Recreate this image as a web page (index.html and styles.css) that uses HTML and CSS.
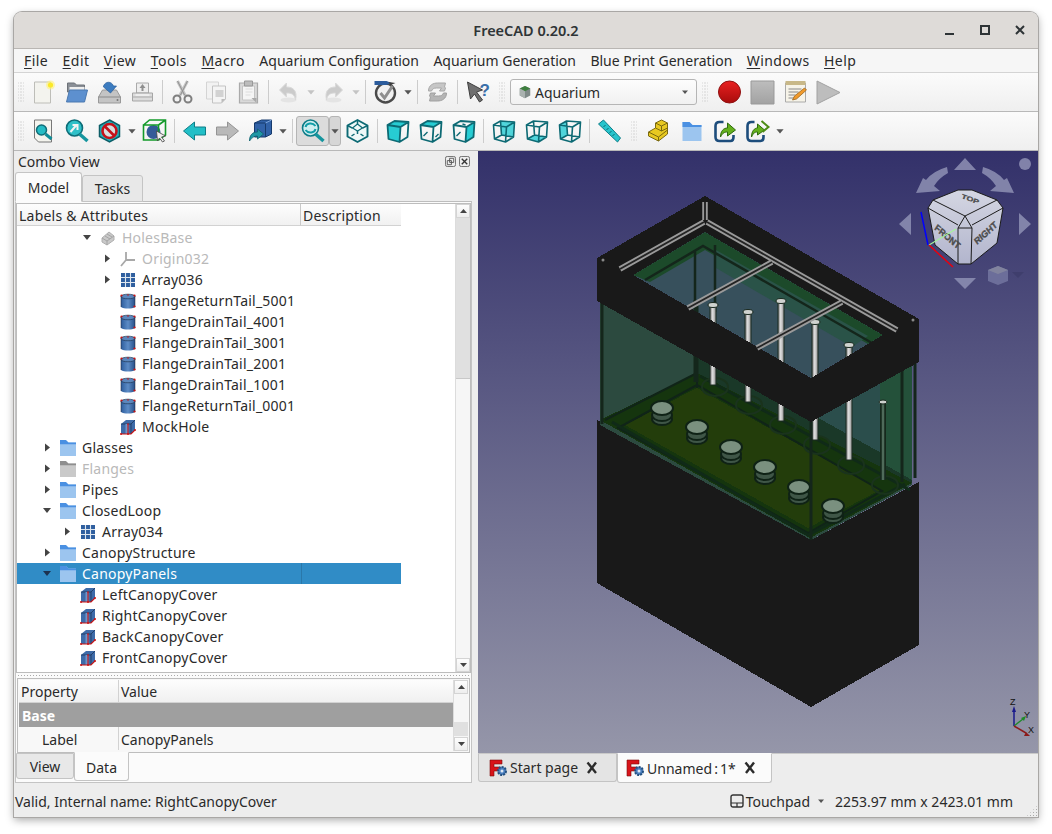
FILE: index.html
```html
<!DOCTYPE html>
<html lang="en">
<head>
<meta charset="utf-8">
<title>FreeCAD 0.20.2</title>
<link rel="stylesheet" href="styles.css">
</head>
<body>
<svg class="sprite" aria-hidden="true">
  <defs>
    <linearGradient id="gBlue" x1="0" y1="0" x2="1" y2="0"><stop offset="0" stop-color="#2c5c9c"/><stop offset=".5" stop-color="#5d8cc6"/><stop offset="1" stop-color="#274f88"/></linearGradient>
    <linearGradient id="gPipe" x1="0" y1="0" x2="1" y2="0"><stop offset="0" stop-color="#777"/><stop offset=".45" stop-color="#e2e2e2"/><stop offset="1" stop-color="#8a8a8a"/></linearGradient>
    <linearGradient id="gCube" x1="0" y1="0" x2="0" y2="1"><stop offset="0" stop-color="#d4d6e2"/><stop offset="1" stop-color="#b2b5cd"/></linearGradient>
    <linearGradient id="gRec" x1="0" y1="0" x2="0" y2="1"><stop offset="0" stop-color="#e92020"/><stop offset="1" stop-color="#a80c0c"/></linearGradient>
    <linearGradient id="gStop" x1="0" y1="0" x2="0" y2="1"><stop offset="0" stop-color="#bdbdbd"/><stop offset="1" stop-color="#a2a2a2"/></linearGradient>

    <symbol id="new" viewBox="0 0 24 24"><path d="M3 2h16v21H3z" fill="#f3f3ee" stroke="#bdbdb8"/><circle cx="19" cy="5" r="4.500" fill="#fff27a" opacity=".6"/><circle cx="19" cy="5" r="2.600" fill="#fbe928"/></symbol>
    <symbol id="open" viewBox="0 0 24 24"><path d="M3 3h7l2 2h8v7H3z" fill="#8a8f96" stroke="#6d7278"/><path d="M5 7h15v4H5z" fill="#eee"/><path d="M5 10h18l-3 12H2z" fill="#5d90cf" stroke="#4a78b0"/></symbol>
    <symbol id="save" viewBox="0 0 24 24"><path d="M5 10h14l4 7v6H1v-6z" fill="#c4c4c4" stroke="#999"/><path d="M1 17h22" stroke="#8a8a8a"/><path d="M6 6c2-5 8-5 10 0h3l-6 7-7-6z" fill="#3c7cc0" stroke="#2a5d99" stroke-width=".7"/><circle cx="20" cy="20" r="1" fill="#777"/></symbol>
    <symbol id="print" viewBox="0 0 24 24"><path d="M6 3h12v10H6z" fill="#eee" stroke="#aaa"/><path d="M12 4l3 4h-2v3h-2V8H9z" fill="#8f8f8f"/><path d="M2 13h20v8H2z" fill="#dcdcdc" stroke="#a5a5a5"/><path d="M2 17h20" stroke="#aaa"/><path d="M5 15h14" stroke="#fff"/></symbol>
    <symbol id="cut" viewBox="0 0 24 24"><path d="M7 1l8 15M17 1L9 16" stroke="#c4c4c4" stroke-width="3" fill="none"/><path d="M7 1l7 14M17 1l-7 14" stroke="#8f8f8f" fill="none"/><circle cx="6.500" cy="19" r="3.500" fill="none" stroke="#7f7f7f" stroke-width="2"/><circle cx="17.500" cy="19" r="3.500" fill="none" stroke="#7f7f7f" stroke-width="2"/></symbol>
    <symbol id="copy" viewBox="0 0 24 24"><path d="M3 2h12v17H3z" fill="#f2f2f2" stroke="#d4d4d4"/><path d="M9 6h13v13l-4 4H9z" fill="#f4f4f4" stroke="#c3c3c3"/><path d="M12 10h8v7h-8z" fill="#d2d2d2"/><path d="M18 23v-4h4z" fill="#bbb"/></symbol>
    <symbol id="paste" viewBox="0 0 24 24"><path d="M3 3h18v20H3z" fill="#d9d9d9" stroke="#aaa" stroke-width="1.200"/><path d="M6 6h12v14H6z" fill="#f5f5f5" stroke="#c4c4c4"/><path d="M8 1h8v5H8z" fill="#bcbcbc" stroke="#999"/><path d="M9 9h7M9 12h7M9 15h5" stroke="#ddd"/><path d="M20 23v-5h-5z" fill="#aaa"/></symbol>
    <symbol id="undo" viewBox="0 0 24 24"><ellipse cx="12" cy="20" rx="8" ry="2.500" fill="#e4e4e4"/><path d="M3 10l7-7v4c7 0 11 4 9 13-1-6-4-7-9-7v4z" fill="#cbcbcb" stroke="#d9d9d9"/></symbol>
    <symbol id="redo" viewBox="0 0 24 24"><ellipse cx="12" cy="20" rx="8" ry="2.500" fill="#e4e4e4"/><path d="M21 10l-7-7v4C7 7 3 11 5 20c1-6 4-7 9-7v4z" fill="#cbcbcb" stroke="#d9d9d9"/></symbol>
    <symbol id="check" viewBox="0 0 24 24"><circle cx="12" cy="13" r="9.500" fill="#f1f1f1" stroke="#4a4a4a" stroke-width="2.400"/><path d="M7 13l4 5 8-12" fill="none" stroke="#8e8e8e" stroke-width="3"/><path d="M1 1h12l5 2-5 2H1z" fill="#2c5c9c"/><path d="M15 2l7 1-5 2" fill="#3d3d3d"/></symbol>
    <symbol id="refresh" viewBox="0 0 24 24"><path d="M3 11C3 5 8 3 12 3h8l-1 4 1 1-1 3h-5l2-3h-5c-3 0-4 1-5 3z" fill="#c6c6c6" stroke="#a8a8a8"/><path d="M21 13c0 6-5 8-9 8H4l1-4-1-1 1-3h5l-2 3h5c3 0 4-1 5-3z" fill="#b5b5b5" stroke="#a0a0a0"/></symbol>
    <symbol id="whats" viewBox="0 0 24 24"><path d="M2 2l15 8-6 2 6 8-3 2-5-8-4 5z" fill="#6f6f6f" stroke="#3f3f3f"/><text x="14" y="16" class="qm">?</text></symbol>

    <symbol id="fitall" viewBox="0 0 24 24"><path d="M3 1h17v22H7l-4-4z" fill="#f4f4ee" stroke="#777"/><circle cx="10" cy="11" r="5" fill="#25bcc4" stroke="#0e6d78" stroke-width="1.500"/><path d="M14 15l6 5" stroke="#0e8d98" stroke-width="3"/></symbol>
    <symbol id="fitsel" viewBox="0 0 24 24"><circle cx="10" cy="9" r="8" fill="#2fc0c8" stroke="#0e6d78" stroke-width="1.600"/><path d="M15 15l8 7" stroke="#15959e" stroke-width="3.500"/><path d="M6 13l6-7m-4 0h5v5" fill="none" stroke="#f3f3f3" stroke-width="2"/></symbol>
    <symbol id="nodraw" viewBox="0 0 24 24"><path d="M12 1l10 5.500v11L12 23 2 17.500v-11z" fill="#1fb4bd" stroke="#0d5d67" stroke-width="1.500"/><circle cx="12" cy="12" r="7" fill="#d7dfe0" stroke="#c5121a" stroke-width="2.600"/><path d="M7 7l10 10" stroke="#c5121a" stroke-width="2.600"/></symbol>
    <symbol id="boxsel" viewBox="0 0 24 24"><circle cx="11" cy="13" r="7" fill="#345c98"/><path d="M1 6v15h15V6zM1 6l6-5h16v15l-7 5M16 6l7-5" fill="none" stroke="#139a2a" stroke-width="1.600"/><path d="M14 12l9 5-4 1 3 4-2 1-3-4-2 3z" fill="#eee" stroke="#444" stroke-width=".8"/></symbol>
    <symbol id="back" viewBox="0 0 24 24"><path d="M1 12L12 3v5h11v8H12v5z" fill="#22bfc7" stroke="#0f7e88"/></symbol>
    <symbol id="fwd" viewBox="0 0 24 24"><path d="M23 12L12 3v5H1v8h11v5z" fill="#b9b9b9" stroke="#949494"/></symbol>
    <symbol id="bluebox" viewBox="0 0 24 24"><path d="M6 4l7-3h10v14l-6 3H6z" fill="#3162a8" stroke="#163a6c"/><path d="M6 4h11v14" fill="none" stroke="#163a6c"/><path d="M17 4l6-3" stroke="#7aa2d8"/><path d="M1 22c0-6 3-9 8-9V10l6 5-6 5v-3c-3 0-5 1-8 5z" fill="#1f97a5" stroke="#0e5f6c" stroke-width=".8"/></symbol>
    <symbol id="sync" viewBox="0 0 24 24"><circle cx="10" cy="9" r="8" fill="#cfeef0" stroke="#0e7d88" stroke-width="1.600"/><path d="M15 15l8 7" stroke="#15959e" stroke-width="3.500"/><path d="M5 8c1-4 7-5 10-1M15 10c-1 4-7 5-10 1" fill="none" stroke="#129ea8" stroke-width="2"/></symbol>
    <symbol id="iso" viewBox="0 0 24 24"><path d="M12 1l10 5.500v11L12 23 2 17.500v-11z" fill="#eef8f8" stroke="#0d6a74" stroke-width="1.900" stroke-linejoin="round"/><path d="M2 6.500l5 2.700M22 6.500l-5 2.700M12 1v4M12 12v3" fill="none" stroke="#0d6a74" stroke-width="1.500"/><path d="M7 9l5-4 5 4-5 3z" fill="none" stroke="#0d6a74" stroke-width="1.200"/><path d="M6 17l3-2M18 17l-3-2" stroke="#0d6a74" stroke-width="1.500"/></symbol>
    <g id="cubefront"><path d="M2 6L9 2 23 3 22 18 14 23 3 20zM2 6L15 8 23 3M15 8L14 23" fill="none" stroke="#0d6a74" stroke-width="1.800" stroke-linejoin="round"/></g>
    <g id="cubeback"><path d="M2 6L9 2 23 3 22 18 14 23 3 20zM9 2L10 16 22 18M10 16L3 20M2 6L15 8 23 3M15 8L14 23" fill="none" stroke="#0d6a74" stroke-width="1.600" stroke-linejoin="round"/></g>
    <symbol id="vfront" viewBox="0 0 24 24"><path d="M2 6L15 8 14 23 3 20zM9 2L23 3 15 8 2 6z" fill="#27ccd3"/><use href="#cubefront"/></symbol>
    <symbol id="vtop" viewBox="0 0 24 24"><path d="M2 6L9 2 23 3 15 8z" fill="#27ccd3"/><use href="#cubefront"/><path d="M5 17l4-4M17 18l3-3" stroke="#0d6a74" stroke-width="1.400"/></symbol>
    <symbol id="vright" viewBox="0 0 24 24"><path d="M15 8L23 3 22 18 14 23z" fill="#27ccd3"/><use href="#cubefront"/><path d="M5 17l4-4M11 5l3 1" stroke="#0d6a74" stroke-width="1.400"/></symbol>
    <symbol id="vrear" viewBox="0 0 24 24"><path d="M9 2L23 3 22 18 10 16z" fill="#27ccd3" opacity=".8"/><use href="#cubeback"/></symbol>
    <symbol id="vbottom" viewBox="0 0 24 24"><path d="M3 20L10 16 22 18 14 23z" fill="#27ccd3" opacity=".8"/><use href="#cubeback"/></symbol>
    <symbol id="vleft" viewBox="0 0 24 24"><path d="M2 6L9 2 10 16 3 20z" fill="#27ccd3" opacity=".8"/><use href="#cubeback"/></symbol>
    <symbol id="measure" viewBox="0 0 24 24"><path d="M1 5l5-4 17 18-3 4z" fill="#27c4cc" stroke="#0d7d88"/><path d="M6 8l2-2M9 11l2-2M12 14l2-2M15 17l2-2" stroke="#0d6a74"/></symbol>
    <symbol id="part" viewBox="0 0 24 24"><path d="M2 13l7-4V4l6-3 6 3v11l-9 7-10-5z" fill="#e8c920" stroke="#7b6a10"/><path d="M9 9l6 3 6-3M9 4l6 3 6-3M15 7v5M2 13l10 5 9-7M12 18v4" fill="none" stroke="#7b6a10"/></symbol>
    <symbol id="folder" viewBox="0 0 24 24"><path d="M3 3h7l3 3h9v16H3z" fill="#9cc5ef"/><path d="M3 3h7l3 3h9v2H3z" fill="#4a90e2"/></symbol>
    <symbol id="tfolder" viewBox="3 3 19 19"><path d="M3 3h7l3 3h9v16H3z" fill="#9cc5ef"/><path d="M3 3h7l3 3h9v2H3z" fill="#4a90e2"/></symbol>
    <symbol id="link" viewBox="0 0 24 24"><path d="M11 3H7q-4 0-4 4v11q0 4 4 4h11q3 0 3-4v-2" fill="none" stroke="#1d4d7c" stroke-width="2.600"/><path d="M8 18c0-6 3-9 7-9V4l8 7-8 6v-4c-3 0-5 1-7 5z" fill="#64b01d" stroke="#2d6a0c"/></symbol>
    <symbol id="link2" viewBox="0 0 24 24"><path d="M9 3H6q-4 0-4 4v11q0 4 4 4h9q3 0 3-4v-2" fill="none" stroke="#1d4d7c" stroke-width="2.600"/><path d="M6 18c0-6 3-9 6-9V5l7 6-7 5v-3c-3 0-4 1-6 5z" fill="#64b01d" stroke="#2d6a0c"/><path d="M16 2l7 6-6 5" fill="none" stroke="#4e8c16" stroke-width="2"/></symbol>
    <symbol id="macro" viewBox="0 0 24 24"><path d="M2 3h20v19H2z" fill="#f6f3e8" stroke="#aaa"/><path d="M2 1h20v4H2z" fill="#c8b888"/><path d="M5 9h13M5 12h10M5 15h7M5 18h6" stroke="#888"/><path d="M9 20l2-4 10-8 2 2-10 9z" fill="#f19a2b" stroke="#8f5a12" stroke-width=".7"/></symbol>
    <symbol id="wb" viewBox="0 0 16 16"><path d="M8 1l6 3v8l-6 3-6-3V4z" fill="#7f8a88"/><path d="M8 1l6 3-6 3-6-3z" fill="#3f7f3f"/><path d="M2 4l6 3v8l-6-3z" fill="#aab2b0"/></symbol>

    <symbol id="cyl" viewBox="0 0 16 16"><path d="M1 3h14v11c-3 2-11 2-14 0z" fill="url(#gBlue)"/><ellipse cx="8" cy="3.500" rx="7" ry="2.300" fill="#5b87bd" stroke="#1e3552" stroke-width=".7"/><path d="M1 3v11M15 3v11" stroke="#223" stroke-width=".5"/><g fill="#c91414"><circle cx="1.500" cy="2.500" r="1.100"/><circle cx="14.500" cy="2.500" r="1.100"/><circle cx="14.500" cy="13.500" r="1.100"/><circle cx="8" cy="2" r=".8"/></g></symbol>
    <symbol id="box" viewBox="0 0 16 16"><path d="M1 5l5-4h9v10l-4 4H1z" fill="#3e6ba8"/><path d="M1 5h10v10M11 5l4-4" fill="none" stroke="#1c3558" stroke-width=".8"/><path d="M7 5v10" stroke="#6d96cc" stroke-width="3"/><path d="M1 15h10l4-4M8 5v10" fill="none" stroke="#c91414" stroke-width="1.100"/><g fill="#c91414"><circle cx="1" cy="15" r="1"/><circle cx="15" cy="11" r="1"/><circle cx="8" cy="15" r="1"/><circle cx="8" cy="5" r=".8"/></g></symbol>
    <symbol id="solid" viewBox="0 0 16 16"><path d="M2 8l7-6 5 4v4l-7 5-5-3z" fill="#c9c9c9" stroke="#b0b0b0"/><path d="M2 8l5 3 7-5M7 11v4M5 6l5 3M7 4l5 3" fill="none" stroke="#a5a5a5"/></symbol>
    <symbol id="origin" viewBox="0 0 16 16"><path d="M6 1v8l-5 6M6 9l9 0" fill="none" stroke="#a8a8a8" stroke-width="1.800"/></symbol>
    <symbol id="array" viewBox="0 0 16 16"><path d="M1 1h14v14H1z" fill="#2f5f9f"/><path d="M5.500 1v14M10.500 1v14M1 5.500h14M1 10.500h14" stroke="#dfe7ef" stroke-width="1.100"/></symbol>
    <symbol id="fc" viewBox="0 0 18 18"><path d="M1 1h12v4H5v3h6v4H5v5H1z" fill="#d8141a" stroke="#7a0a0a" stroke-width=".6"/><circle cx="13" cy="12" r="4" fill="#4a7fc0" stroke="#24507f" stroke-width="2" stroke-dasharray="2 1"/><circle cx="13" cy="12" r="1.500" fill="#dfe8f2"/></symbol>
    <symbol id="x" viewBox="0 0 14 14"><path d="M2.500 1.500L11 12M11 1.500L3 12" stroke="#2b2b2b" stroke-width="2.400" fill="none"/></symbol>
  </defs>
</svg>

<div class="window">
  <header class="titlebar">
    <span class="title">FreeCAD 0.20.2</span>
    <div class="winctl">
      <svg class="wbtn" viewBox="0 0 14 14"><path d="M2 11h9" stroke="#2e3436" stroke-width="2"/></svg>
      <svg class="wbtn" viewBox="0 0 14 14"><path d="M3 3h8v8H3z" fill="none" stroke="#2e3436" stroke-width="2"/></svg>
      <svg class="wbtn" viewBox="0 0 14 14"><path d="M3 3l8 8M11 3l-8 8" stroke="#2e3436" stroke-width="2"/></svg>
    </div>
  </header>

  <nav class="menubar">
    <span class="mi ul"><u>F</u>ile</span><span class="mi ul"><u>E</u>dit</span><span class="mi ul"><u>V</u>iew</span><span class="mi ul"><u>T</u>ools</span><span class="mi ul"><u>M</u>acro</span><span class="mi">Aquarium Configuration</span><span class="mi">Aquarium Generation</span><span class="mi">Blue Print Generation</span><span class="mi ul"><u>W</u>indows</span><span class="mi ul"><u>H</u>elp</span>
  </nav>

  <div class="toolbar">
    <i class="grip"></i>
    <svg class="tb"><use href="#new"/></svg><svg class="tb"><use href="#open"/></svg><svg class="tb"><use href="#save"/></svg><svg class="tb"><use href="#print"/></svg>
    <i class="sep"></i>
    <svg class="tb"><use href="#cut"/></svg><svg class="tb"><use href="#copy"/></svg><svg class="tb"><use href="#paste"/></svg>
    <i class="sep"></i>
    <svg class="tb"><use href="#undo"/></svg><i class="drop off"></i><svg class="tb"><use href="#redo"/></svg><i class="drop off"></i>
    <i class="sep"></i>
    <svg class="tb"><use href="#check"/></svg><i class="drop"></i>
    <i class="sep"></i>
    <svg class="tb"><use href="#refresh"/></svg>
    <i class="sep"></i>
    <svg class="tb"><use href="#whats"/></svg>
    <i class="grip wide"></i>
    <div class="combo"><svg class="wbicon"><use href="#wb"/></svg><span class="combotext">Aquarium</span><i class="drop small"></i></div>
    <i class="grip wide"></i>
    <svg class="tb" viewBox="0 0 33 24"><circle cx="16.500" cy="12" r="11" fill="url(#gRec)" stroke="#8f1010"/></svg>
    <svg class="tb" viewBox="0 0 33 24"><path d="M5 1h23v23H5z" fill="url(#gStop)" stroke="#999"/></svg>
    <svg class="tb"><use href="#macro"/></svg>
    <svg class="tb" viewBox="0 0 33 24"><path d="M5 1l23 11.500L5 24z" fill="#bdbdbd" stroke="#a2a2a2"/></svg>
  </div>

  <div class="toolbar">
    <i class="grip"></i>
    <svg class="tb"><use href="#fitall"/></svg><svg class="tb"><use href="#fitsel"/></svg><svg class="tb"><use href="#nodraw"/></svg><i class="drop"></i><svg class="tb"><use href="#boxsel"/></svg>
    <i class="sep"></i>
    <svg class="tb"><use href="#back"/></svg><svg class="tb"><use href="#fwd"/></svg><svg class="tb"><use href="#bluebox"/></svg><i class="drop"></i>
    <i class="sep"></i>
    <div class="pressed"><svg class="tb"><use href="#sync"/></svg></div><div class="pressed-drop"><i class="drop"></i></div>
    <svg class="tb"><use href="#iso"/></svg>
    <i class="sep"></i>
    <svg class="tb"><use href="#vfront"/></svg><svg class="tb"><use href="#vtop"/></svg><svg class="tb"><use href="#vright"/></svg>
    <i class="sep"></i>
    <svg class="tb"><use href="#vrear"/></svg><svg class="tb"><use href="#vbottom"/></svg><svg class="tb"><use href="#vleft"/></svg>
    <i class="sep"></i>
    <svg class="tb"><use href="#measure"/></svg>
    <i class="grip wide"></i>
    <svg class="tb"><use href="#part"/></svg><svg class="tb"><use href="#folder"/></svg><svg class="tb"><use href="#link"/></svg><svg class="tb"><use href="#link2"/></svg><i class="drop"></i>
  </div>

  <main class="main">
    <section class="dock">
      <div class="docktitle"><span>Combo View</span>
        <div class="dockbtns">
          <svg class="dbtn" viewBox="0 0 12 12"><rect x=".5" y=".5" width="11" height="11" rx="2" fill="none" stroke="#666"/><path d="M5 2.500h4.500V7H5zM2.500 5H7v4.500H2.500z" fill="none" stroke="#555"/></svg>
          <svg class="dbtn" viewBox="0 0 12 12"><rect x=".5" y=".5" width="11" height="11" rx="2" fill="none" stroke="#666"/><path d="M3 3l6 6M9 3l-6 6" stroke="#333" stroke-width="1.500"/></svg>
        </div>
      </div>
      <div class="tabs">
        <span class="tab on">Model</span><span class="tab">Tasks</span>
      </div>
      <div class="panel">
        <div class="tree">
          <div class="treebody">
            <div class="thead"><span class="th c1">Labels &amp; Attributes</span><span class="th c2">Description</span></div>
            <div class="rows">
              <div class="row l3 dim"><i class="arr open"></i><svg class="ti"><use href="#solid"/></svg><span>HolesBase</span></div>
              <div class="row l4 dim"><i class="arr closed"></i><svg class="ti"><use href="#origin"/></svg><span>Origin032</span></div>
              <div class="row l4"><i class="arr closed"></i><svg class="ti"><use href="#array"/></svg><span>Array036</span></div>
              <div class="row l4"><i class="arr"></i><svg class="ti"><use href="#cyl"/></svg><span>FlangeReturnTail_5001</span></div>
              <div class="row l4"><i class="arr"></i><svg class="ti"><use href="#cyl"/></svg><span>FlangeDrainTail_4001</span></div>
              <div class="row l4"><i class="arr"></i><svg class="ti"><use href="#cyl"/></svg><span>FlangeDrainTail_3001</span></div>
              <div class="row l4"><i class="arr"></i><svg class="ti"><use href="#cyl"/></svg><span>FlangeDrainTail_2001</span></div>
              <div class="row l4"><i class="arr"></i><svg class="ti"><use href="#cyl"/></svg><span>FlangeDrainTail_1001</span></div>
              <div class="row l4"><i class="arr"></i><svg class="ti"><use href="#cyl"/></svg><span>FlangeReturnTail_0001</span></div>
              <div class="row l4"><i class="arr"></i><svg class="ti"><use href="#box"/></svg><span>MockHole</span></div>
              <div class="row l1"><i class="arr closed"></i><svg class="ti"><use href="#tfolder"/></svg><span>Glasses</span></div>
              <div class="row l1 dim"><i class="arr closed"></i><svg class="ti grayed"><use href="#tfolder"/></svg><span>Flanges</span></div>
              <div class="row l1"><i class="arr closed"></i><svg class="ti"><use href="#tfolder"/></svg><span>Pipes</span></div>
              <div class="row l1"><i class="arr open"></i><svg class="ti"><use href="#tfolder"/></svg><span>ClosedLoop</span></div>
              <div class="row l2"><i class="arr closed"></i><svg class="ti"><use href="#array"/></svg><span>Array034</span></div>
              <div class="row l1"><i class="arr closed"></i><svg class="ti"><use href="#tfolder"/></svg><span>CanopyStructure</span></div>
              <div class="row l1 sel"><i class="arr open"></i><svg class="ti"><use href="#tfolder"/></svg><span>CanopyPanels</span></div>
              <div class="row l2"><i class="arr"></i><svg class="ti"><use href="#box"/></svg><span>LeftCanopyCover</span></div>
              <div class="row l2"><i class="arr"></i><svg class="ti"><use href="#box"/></svg><span>RightCanopyCover</span></div>
              <div class="row l2"><i class="arr"></i><svg class="ti"><use href="#box"/></svg><span>BackCanopyCover</span></div>
              <div class="row l2"><i class="arr"></i><svg class="ti"><use href="#box"/></svg><span>FrontCanopyCover</span></div>
            </div>
          </div>
          <div class="vscroll big"><i class="sb up"></i><div class="track"><div class="thumb"></div></div><i class="sb dn"></i></div>
        </div>
        <div class="splitter"></div>
        <div class="props">
          <div class="propbody">
            <div class="phead"><span class="pk">Property</span><span class="pv">Value</span></div>
            <div class="pgroup">Base</div>
            <div class="prow"><span class="pk indent">Label</span><span class="pv">CanopyPanels</span></div>
          </div>
          <div class="vscroll small"><i class="sb up"></i><div class="track"><div class="thumb"></div></div><i class="sb dn"></i></div>
        </div>
        <div class="btabs"><span class="btab">View</span><span class="btab on">Data</span></div>
      </div>
    </section>

    <section class="mdi">
      <div class="viewport">
        <svg class="scene" viewBox="478 151 560 602" aria-label="3D view of an aquarium">
          <g shape-rendering="crispEdges">
            <path d="M597 420L811 540 919 482V645L811 707 597 583z" fill="#191919"/>
            <path d="M600 290L811 400 912 350V485L811 540 600 425z" fill="#2c4a3f"/>
            <path d="M697 340L912 460V483L697 373z" fill="#1a3828"/>
            <path d="M813 400L912 350V470L813 415z" fill="#2b4e4c"/>
            <path d="M880 360L912 345V480L880 462z" fill="#24513a"/>
            <path d="M600 420L697 373 912 483 810 538z" fill="#15350e"/>
            <path d="M625 425L697 388 880 490 808 528z" fill="#233d0b"/>
          </g>
          <path d="M618 428L697 385 882 491 808 533zM697 373L697 388M605 420L697 373" fill="none" stroke="#102418" stroke-width="2"/>
          <path d="M700 376L910 490M612 422L808 535 905 484" fill="none" stroke="#102a18" stroke-width="3"/>
          <path d="M633 275L705 232 883 335 811 378z" fill="#37505c"/>
          <path d="M705 232L883 335 868 344 705 250 650 282 633 275z" fill="#1c4a2a"/>
          <path d="M716 250L868 336 852 347 716 268z" fill="#2a5348"/>
          <path d="M645 280L703 246 872 343M695 250V313M715 245V312" fill="none" stroke="#14261b" stroke-width="2.500"/>
          <g fill="none" stroke="#1a331d" stroke-width="2">
            <ellipse cx="715" cy="387" rx="13" ry="9"/><ellipse cx="749" cy="405" rx="13" ry="9"/><ellipse cx="783" cy="425" rx="13" ry="9"/><ellipse cx="817" cy="445" rx="13" ry="9"/><ellipse cx="851" cy="465" rx="13" ry="9"/><ellipse cx="885" cy="485" rx="13" ry="9"/>
          </g>
          <g fill="url(#gPipe)" stroke="#1b2a20">
            <rect x="710" y="305" width="6" height="80"/><rect x="745" y="312" width="6" height="90"/><rect x="778" y="301" width="6" height="120"/><rect x="812" y="322" width="6" height="118"/><rect x="846" y="345" width="6" height="115"/>
          </g>
          <path d="M883 402V480" stroke="#16281c" stroke-width="6"/><path d="M883 402V480" stroke="#4f6a5a" stroke-width="2.500"/>
          <g fill="#cfd2cf" stroke="#1b2a20">
            <ellipse cx="713" cy="305" rx="5" ry="2.500"/><ellipse cx="748" cy="312" rx="5" ry="2.500"/><ellipse cx="781" cy="301" rx="5" ry="2.500"/><ellipse cx="815" cy="322" rx="5" ry="2.500"/><ellipse cx="849" cy="345" rx="5" ry="2.500"/><ellipse cx="883" cy="402" rx="4" ry="2"/>
          </g>
          <g id="stumps">
            <g class="stump"><ellipse cx="662" cy="419" rx="10" ry="6"/><ellipse cx="662" cy="415" rx="10" ry="6"/><ellipse cx="662" cy="408" rx="11" ry="7" class="cap"/></g>
            <g class="stump"><ellipse cx="697" cy="438" rx="10" ry="6"/><ellipse cx="697" cy="434" rx="10" ry="6"/><ellipse cx="697" cy="427" rx="11" ry="7" class="cap"/></g>
            <g class="stump"><ellipse cx="731" cy="458" rx="10" ry="6"/><ellipse cx="731" cy="454" rx="10" ry="6"/><ellipse cx="731" cy="447" rx="11" ry="7" class="cap"/></g>
            <g class="stump"><ellipse cx="765" cy="478" rx="10" ry="6"/><ellipse cx="765" cy="474" rx="10" ry="6"/><ellipse cx="765" cy="467" rx="11" ry="7" class="cap"/></g>
            <g class="stump"><ellipse cx="799" cy="498" rx="10" ry="6"/><ellipse cx="799" cy="494" rx="10" ry="6"/><ellipse cx="799" cy="487" rx="11" ry="7" class="cap"/></g>
            <g class="stump"><ellipse cx="833" cy="517" rx="10" ry="6"/><ellipse cx="833" cy="513" rx="10" ry="6"/><ellipse cx="833" cy="506" rx="11" ry="7" class="cap"/></g>
          </g>
          <path d="M602 298V424M811 410V540M902 360V482M915 350V478M695 300V382M697 300V382" fill="none" stroke="#14261b" stroke-width="3"/>
          <path d="M705 196L919 319V362L811 422 597 301V258zM705 232L633 275 811 378 883 335z" fill="#191919" fill-rule="evenodd" shape-rendering="crispEdges"/>
          <g fill="none" stroke-linecap="butt">
            <g stroke="#9a9a9a" stroke-width="5.500"><path d="M704 222L620 269M707 222L897 330M772 262L688 308M842 302L757 348M705 202V220"/></g>
            <g stroke="#242424" stroke-width="1.900"><path d="M704 222L620 269M707 222L897 330M772 262L688 308M842 302L757 348M705 202V220"/></g>
          </g>
          <circle cx="603" cy="260" r="1.500" fill="#888"/><circle cx="913" cy="320" r="1.500" fill="#888"/>

          <g class="navi">
            <path d="M965 158l11 12h-22zM899 224l12-11v22zM1031 224l-12-11v22zM965 289l-11-11h22z"/>
            <circle cx="1025" cy="164" r="6"/>
            <path d="M947 167Q933 171 926 180L923 178 916 193 940 191 934 186Q939 178 948 173z"/>
            <path d="M983 167Q997 171 1004 180L1007 178 1014 193 990 191 996 186Q991 178 982 173z"/>
            <path class="mini" d="M998 266l10 4v11l-10 4-10-4v-11z"/>
            <path class="mini3" d="M998 266l10 4-10 4-10-4z"/>
            <path class="mini2" d="M1012 272h12l-6 6z"/>
          </g>
          <g class="cube">
            <path class="face" d="M958 190H972L997 200 1003 208 997 243 971 264H958L935 245 928 208 933 200z"/>
            <path class="edge" d="M933 200L965 216 997 200M928 208L958 225M1003 208L972 225M965 216L958 228H972zM958 228V264M972 228L971 264"/>
            <text class="cubelabel" transform="translate(934 229) rotate(33) skewY(8)">FRONT</text>
            <text class="cubelabel" transform="translate(977 245) rotate(-34) skewY(-8)">RIGHT</text>
            <text class="cubelabel" transform="translate(961 198) rotate(20) scale(1 .7)">TOP</text>
            <path d="M928 245L921 212" stroke="#0000ff" stroke-width="1.500"/><path d="M929 245L956 229" stroke="#a4f59a" stroke-width="1.200"/><path d="M929 245L953 267" stroke="#e8000f" stroke-width="1.500"/>
          </g>
          <g class="axis">
            <path d="M1014 726V711" stroke="#1a1a8c" stroke-width="1.500"/><path d="M1014 706l2 6h-4z" fill="#1a1a8c"/>
            <path d="M1014 726l9-7" stroke="#1f8a2a" stroke-width="1.300"/><path d="M1026 716l-2 5-3-3z" fill="#1f8a2a"/>
            <path d="M1014 726l12 7" stroke="#8c1a1a" stroke-width="1.500"/><path d="M1030 736l-6 0 2-4z" fill="#8c1a1a"/>
            <text x="1010" y="705">Z</text><text x="1024" y="718">Y</text><text x="1028" y="733">X</text>
          </g>
        </svg>
      </div>
      <div class="mditabs">
        <span class="mtab"><svg class="fc"><use href="#fc"/></svg><span>Start page</span><svg class="mx"><use href="#x"/></svg></span>
        <span class="mtab on"><svg class="fc"><use href="#fc"/></svg><span class="tight">Unnamed : 1*</span><svg class="mx"><use href="#x"/></svg></span>
      </div>
    </section>
  </main>

  <footer class="statusbar">
    <span class="msg">Valid, Internal name: RightCanopyCover</span>
    <div class="sright">
      <svg class="pad" viewBox="0 0 14 14"><rect x="1" y="1" width="12" height="12" rx="2" fill="none" stroke="#333" stroke-width="1.400"/><path d="M1 9h12M7 9v4" stroke="#333" stroke-width="1.200"/></svg>
      <span class="touch">Touchpad</span><i class="drop small"></i>
      <span class="dims">2253.97 mm x 2423.01 mm</span>
    </div>
    <i class="sizegrip"></i>
  </footer>
</div>
</body>
</html>
```

FILE: styles.css
```css
* { box-sizing: border-box; }
html, body { margin: 0; height: 100%; }
body {
  background: #fff;
  padding: 12px 0 0 14px;
  font-family: "Noto Sans", "DejaVu Sans", sans-serif;
  font-size: 14px;
  color: #2a2a2a;
  overflow: hidden;
}
.sprite { position: absolute; width: 0; height: 0; }
.qm { font: bold 17px "Liberation Sans", sans-serif; fill: #3a6ea8; }

.window {
  width: 1024px;
  height: 805px;
  display: flex;
  flex-direction: column;
  background: #ededed;
  border-radius: 8px 8px 0 0;
  box-shadow: 0 0 0 1px #a9a7a5, 0 3px 8px rgba(0,0,0,.35);
}

.titlebar {
  height: 37px;
  flex: none;
  display: flex;
  align-items: center;
  justify-content: center;
  position: relative;
  background: #dedbd8;
  border-bottom: 1px solid #b9b6b3;
  border-radius: 8px 8px 0 0;
}
.title { font-weight: 600; font-size: 14.5px; color: #2e3436; }
.winctl {
  position: absolute;
  right: 11px;
  top: 11px;
  display: flex;
  gap: 21px;
}
.wbtn { width: 14px; height: 14px; }

.menubar {
  height: 24px;
  flex: none;
  display: flex;
  align-items: center;
  padding-left: 10px;
  gap: 14.400px;
  background: #f6f6f6;
  border-bottom: 1px solid #d4d4d4;
}
.mi { line-height: 23px; }
.mi.ul { letter-spacing: .45px; }
.mi u { text-underline-offset: 2px; }

.toolbar {
  height: 39px;
  flex: none;
  display: flex;
  align-items: center;
  padding-left: 1px;
  background: linear-gradient(#fbfbfb, #efefef);
  border-bottom: 1px solid #b8b8b8;
}
.tb { width: 33px; height: 24px; flex: none; overflow: visible; }
.grip {
  width: 12px;
  height: 20px;
  flex: none;
  background: radial-gradient(circle, #b4b4b4 .7px, transparent 1px) center / 3px 3px repeat;
  background-clip: content-box;
  padding: 0 3px;
}
.grip.wide { width: 16px; padding: 0 5px; }
.sep { width: 7px; height: 24px; flex: none; background: linear-gradient(#ccc, #ccc) center / 1px 100% no-repeat; }
.drop { width: 12px; height: 6px; flex: none; background: #555; clip-path: polygon(20% 20%, 80% 20%, 50% 90%); }
.drop.off { background: #c4c4c4; }
.drop.small { width: 10px; height: 5px; }
.pressed {
  width: 33px;
  height: 30px;
  flex: none;
  display: flex;
  align-items: center;
  background: #dcdcdc;
  border: 1px solid #b5b5b5;
  border-radius: 3px;
}
.pressed .tb { margin-left: -1px; }
.pressed-drop {
  width: 12px;
  height: 30px;
  flex: none;
  display: flex;
  align-items: center;
  background: #d6d6d6;
  border: 1px solid #b5b5b5;
  border-radius: 3px;
}
.pressed-drop .drop { margin-left: -1px; }
.combo {
  width: 187px;
  height: 26px;
  flex: none;
  display: flex;
  align-items: center;
  padding: 0 6px 0 7px;
  background: linear-gradient(#fdfdfd, #f1f1f1);
  border: 1px solid #b5b5b5;
  border-radius: 3px;
}
.wbicon { width: 14px; height: 16px; margin-right: 3px; flex: none; }
.combotext { flex: 1; }

.main { flex: 1; min-height: 0; display: flex; padding-left: 1px; gap: 6px; }

.dock { width: 457px; flex: none; display: flex; flex-direction: column; }
.docktitle {
  height: 21px;
  flex: none;
  display: flex;
  align-items: center;
  justify-content: space-between;
  padding: 0 2px 0 3px;
}
.dockbtns { display: flex; gap: 3px; }
.dbtn { width: 11px; height: 11px; }

.tabs { height: 30px; flex: none; display: flex; align-items: flex-end; margin-bottom: -1px; position: relative; z-index: 1; }
.tab {
  height: 27px;
  width: 61px;
  display: flex;
  align-items: center;
  justify-content: center;
  background: #e8e8e8;
  border: 1px solid #c4c4c4;
  border-radius: 3px 3px 0 0;
}
.tab.on {
  height: 30px;
  width: 67px;
  background: #fbfbfb;
  border-bottom-color: #fbfbfb;
}

.panel {
  flex: 1;
  min-height: 0;
  display: flex;
  flex-direction: column;
  background: #fbfbfb;
  border: 1px solid #c4c4c4;
  border-top-color: #bdbdbd;
}
.tree {
  flex: 1;
  min-height: 0;
  display: flex;
  background: #fff;
  border: 1px solid #bdbdbd;
  margin-top: 1px;
}
.treebody { flex: 1; min-width: 0; overflow: hidden; letter-spacing: .22px; }
.thead { display: flex; height: 22px; }
.th {
  display: flex;
  align-items: center;
  padding: 2px 0 0 2px;
  background: linear-gradient(#fdfdfd, #f1f1f1);
  border-bottom: 1px solid #d2d2d2;
}
.th.c1 { width: 284px; border-right: 1px solid #c9c9c9; }
.th.c2 { width: 100px; }
.rows { padding-top: 1px; }
.row { height: 21px; width: 384px; display: flex; align-items: center; }
.row.l1 { padding-left: 20px; }
.row.l2 { padding-left: 40px; }
.row.l3 { padding-left: 60px; }
.row.l4 { padding-left: 80px; }
.row.dim { color: #b9b9b9; }
.row.sel {
  background: #308cc6;
  color: #fff;
  background-image: linear-gradient(#2a78aa, #2a78aa);
  background-size: 1px 100%;
  background-position: 284px 0;
  background-repeat: no-repeat;
}
.arr { width: 20px; height: 10px; flex: none; }
.arr.closed { background: #444; clip-path: polygon(40% 10%, 65% 50%, 40% 90%); }
.arr.open { background: #444; clip-path: polygon(30% 25%, 70% 25%, 50% 75%); }
.row.sel .arr { background: #1c3350; }
.ti { width: 16px; height: 16px; margin: 0 6px 0 3px; flex: none; }
.grayed { filter: grayscale(1) brightness(1.05); }

.vscroll {
  width: 15px;
  flex: none;
  display: flex;
  flex-direction: column;
  background: #f6f6f6;
  border-left: 1px solid #dcdcdc;
}
.sb { height: 14px; flex: none; position: relative; background: linear-gradient(#fdfdfd, #eee); border: 1px solid #d4d4d4; }
.sb::after { content: ""; position: absolute; left: 3px; top: 4px; width: 7px; height: 4px; background: #444; }
.sb.up::after { clip-path: polygon(50% 0, 100% 100%, 0 100%); }
.sb.dn::after { clip-path: polygon(0 0, 100% 0, 50% 100%); }
.track { flex: 1; min-height: 0; }
.big .thumb { height: 161px; background: #e0e0e0; border-bottom: 1px solid #c8c8c8; }
.small .thumb { height: 14px; margin-top: 28px; background: #e0e0e0; }

.splitter { height: 5px; flex: none; background: radial-gradient(#aaa .6px, transparent .8px) center / 3px 3px repeat-x; }
.props {
  height: 75px;
  flex: none;
  display: flex;
  margin: 0 1px;
  background: #f7f7f7;
  border: 1px solid #bdbdbd;
  padding: 1px;
}
.propbody { flex: 1; min-width: 0; }
.phead { display: flex; height: 23px; background: linear-gradient(#fdfdfd, #f0f0f0); border-bottom: 1px solid #d2d2d2; }
.pk { width: 100px; flex: none; padding-left: 2px; line-height: 24px; border-right: 1px solid #d2d2d2; }
.pv { flex: 1; padding-left: 2px; line-height: 24px; }
.pgroup { height: 24px; line-height: 25px; padding-left: 3px; background: #9f9f9f; color: #fff; font-weight: 700; }
.prow { display: flex; height: 23px; background: #f8f8f8; }
.prow .pk, .prow .pv { line-height: 25px; }
.prow .indent { padding-left: 23px; }

.btabs { height: 29px; flex: none; display: flex; align-items: flex-start; }
.btab {
  width: 58px;
  height: 26px;
  display: flex;
  align-items: center;
  justify-content: center;
  background: #e8e8e8;
  border: 1px solid #c4c4c4;
  border-radius: 0 0 3px 3px;
}
.btab.on { width: 55px; height: 29px; margin-top: -1px; padding-top: 2px; background: #fbfbfb; border-top-color: #fbfbfb; }

.mdi { flex: 1; min-width: 0; display: flex; flex-direction: column; }
.viewport { height: 602px; flex: none; background: linear-gradient(#33316a, #9596a9); }
.scene { display: block; width: 100%; height: 100%; }
.stump ellipse { fill: #3f5647; stroke: #0f2216; stroke-width: 2; }
.stump .cap { fill: #7a907f; }
.navi path, .navi circle { fill: #8e90b4; opacity: .85; }
.navi .mini { fill: #7376a0; }
.navi .mini3 { fill: #85879f; }
.navi .mini2 { fill: #3e3d6b; }
.face { fill: url(#gCube); stroke: #1b1b1b; stroke-width: 1; }
.edge { fill: none; stroke: #1b1b1b; stroke-width: 1; }
.cubelabel { font: bold 9px "Liberation Sans", sans-serif; fill: #555; stroke: #333; stroke-width: .3; }
.axis text { font: 9px "Liberation Sans", sans-serif; fill: #111; }

.mditabs { flex: 1; display: flex; align-items: flex-start; border-top: 1px solid #c9c9c9; }
.mtab {
  width: 139px;
  height: 28px;
  display: flex;
  align-items: center;
  padding-left: 10px;
  gap: 3px;
  background: #e4e4e4;
  border: 1px solid #c4c4c4;
  border-top: 0;
  border-radius: 0 0 3px 3px;
}
.mtab.on { width: 155px; height: 30px; margin-top: -1px; padding-left: 8px; background: #fbfbfb; border-top: 1px solid #fbfbfb; }
.tight { word-spacing: -1.500px; }
.fc { width: 18px; height: 18px; flex: none; }
.mx { width: 14px; height: 14px; margin-left: 4px; flex: none; }

.statusbar {
  height: 34px;
  flex: none;
  display: flex;
  align-items: center;
  justify-content: space-between;
  padding: 2px 25px 0 1px;
  position: relative;
}
.sright { display: flex; align-items: center; }
.pad { width: 14px; height: 14px; margin-right: 2px; }
.touch { margin-right: 6px; }
.sright .drop { margin-right: 9px; }
.sizegrip {
  position: absolute;
  right: 0;
  bottom: 0;
  width: 12px;
  height: 12px;
  background: radial-gradient(#aaa .7px, transparent .9px) 0 0 / 3px 3px;
  clip-path: polygon(100% 0, 100% 100%, 0 100%);
}
```
